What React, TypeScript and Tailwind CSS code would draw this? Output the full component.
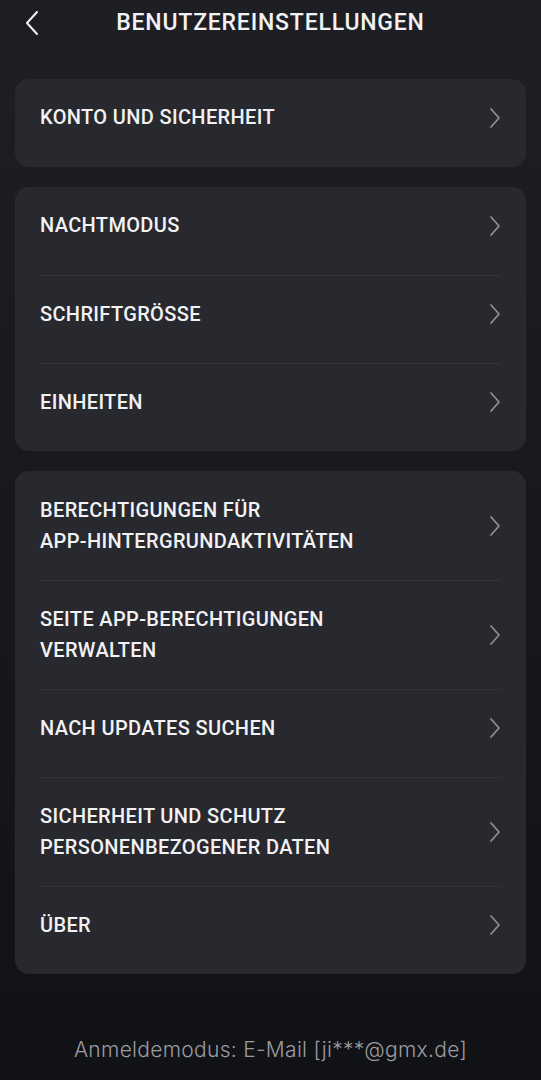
const gruppen = [
  ["KONTO UND SICHERHEIT"],
  ["NACHTMODUS", "SCHRIFTGRÖSSE", "EINHEITEN"],
  [
    "BERECHTIGUNGEN FÜR\nAPP-HINTERGRUNDAKTIVITÄTEN",
    "SEITE APP-BERECHTIGUNGEN\nVERWALTEN",
    "NACH UPDATES SUCHEN",
    "SICHERHEIT UND SCHUTZ\nPERSONENBEZOGENER DATEN",
    "ÜBER",
  ],
];

function Chevron() {
  return (
    <svg width="12" height="22" viewBox="0 0 12 22" fill="none" aria-hidden="true">
      <path d="M2 2l8 9-8 9" stroke="#8d8e93" strokeWidth="1.8" strokeLinecap="round" strokeLinejoin="round" />
    </svg>
  );
}

export default function App() {
  return (
    <div
      className="w-[541px] h-[1080px] flex flex-col bg-gradient-to-b from-[#1e1f25] to-[#111216] text-[#f2f2f4]"
      style={{ fontFamily: "Roboto, 'Liberation Sans', sans-serif" }}
    >
      {/* Kopfzeile */}
      <div className="relative h-[46px] flex items-center justify-center">
        <svg className="absolute left-[24px] top-[10px]" width="16" height="26" viewBox="0 0 16 26" fill="none" aria-hidden="true">
          <path d="M13 2L3 13l10 11" stroke="#f2f2f4" strokeWidth="2" strokeLinecap="round" strokeLinejoin="round" />
        </svg>
        <h1 className="text-[23px] font-medium tracking-[0.8px]">BENUTZEREINSTELLUNGEN</h1>
      </div>

      <div className="flex flex-col gap-[20px] px-[15px] mt-[33px]">
        {gruppen.map((g, gi) => (
          <div key={gi} className="bg-[#28292e] rounded-[14px] px-[25px]">
            {g.map((label, i) => {
              const zweiZeilig = label.includes("\n");
              return (
                <div
                  key={label}
                  className={`flex items-center justify-between ${zweiZeilig ? "h-[109px]" : "h-[88px] pb-[11px]"} ${i > 0 ? "border-t border-[#34353a]" : ""}`}
                >
                  <span className="text-[20px] font-medium leading-[31px] tracking-[0.35px] whitespace-pre-line">{label}</span>
                  <Chevron />
                </div>
              );
            })}
          </div>
        ))}
      </div>

      <div className="mt-auto mb-[15px] text-center text-[21px] tracking-[0.3px] text-[#9c9ca1] font-light" style={{ fontFamily: "Inter, 'Noto Sans', sans-serif" }}>
        Anmeldemodus: E-Mail [ji***@gmx.de]
      </div>
    </div>
  );
}
